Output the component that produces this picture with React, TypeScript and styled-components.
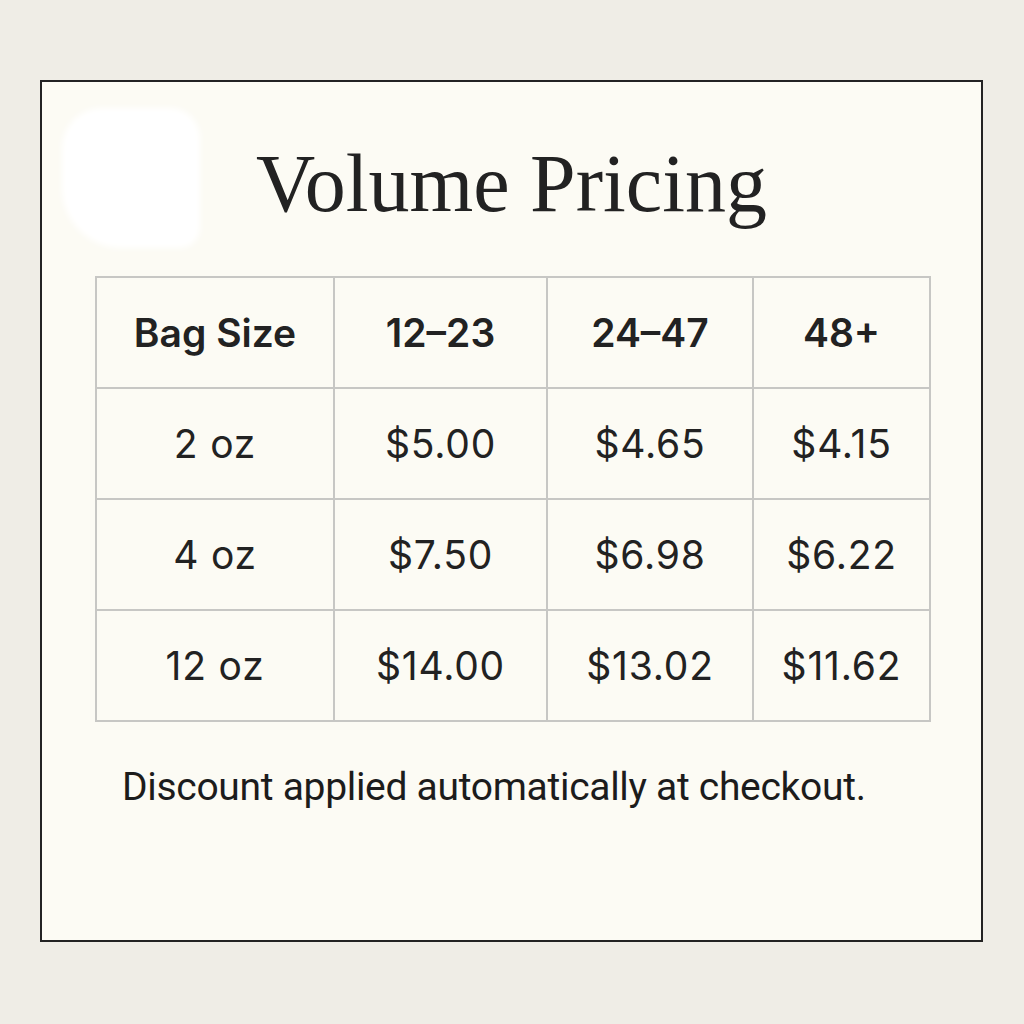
import * as React from 'react';
import styled, { createGlobalStyle } from 'styled-components';

const GlobalStyle = createGlobalStyle`
  html, body {
    margin: 0;
    padding: 0;
    background: #efede6;
  }
`;

const Page = styled.div`
  width: 1024px;
  height: 1024px;
  box-sizing: border-box;
  padding: 80px 0 0 40px;
`;

const Card = styled.div`
  position: relative;
  width: 943px;
  height: 862px;
  box-sizing: border-box;
  border: 2px solid #232323;
  background: #fcfbf4;
  display: flex;
  flex-direction: column;
  align-items: flex-start;
`;

const Smudge = styled.div`
  position: absolute;
  left: 20px;
  top: 26px;
  width: 138px;
  height: 140px;
  background: #ffffff;
  border-radius: 40px 30px 20px 60px;
  filter: blur(3px);
`;

const Title = styled.h1`
  align-self: stretch;
  margin: 61px 0 0;
  font-family: 'Liberation Serif', 'DejaVu Serif', serif;
  font-weight: 400;
  font-size: 82px;
  line-height: 1;
  color: #222222;
  text-align: center;
  position: relative;
`;

const PriceTable = styled.table`
  margin: 51px 0 0 53px;
  border-collapse: collapse;
  table-layout: fixed;
  width: 834px;
  font-family: Inter, 'Liberation Sans', sans-serif;
  color: #222222;
`;

const HeadCell = styled.th`
  height: 109px;
  padding: 0;
  border: 2px solid #c7c7c4;
  font-size: 39px;
  font-weight: 600;
  text-align: center;
  vertical-align: middle;
`;

const Cell = styled.td`
  height: 109px;
  padding: 0;
  border: 2px solid #c7c7c4;
  font-size: 39px;
  font-weight: 400;
  letter-spacing: 0.8px;
  text-align: center;
  vertical-align: middle;
`;

const Note = styled.p`
  margin: 46px 0 0 80px;
  font-family: Roboto, 'Liberation Sans', sans-serif;
  font-size: 39px;
  line-height: 1;
  color: #1c1c1c;
  letter-spacing: -0.3px;
`;

const columns = [
  { label: 'Bag Size', width: 238 },
  { label: '12–23', width: 213 },
  { label: '24–47', width: 206 },
  { label: '48+', width: 177 },
];

const rows = [
  ['2 oz', '$5.00', '$4.65', '$4.15'],
  ['4 oz', '$7.50', '$6.98', '$6.22'],
  ['12 oz', '$14.00', '$13.02', '$11.62'],
];

const App = () => (
  <>
    <GlobalStyle />
    <Page>
      <Card>
        <Smudge />
        <Title>Volume Pricing</Title>
        <PriceTable>
          <colgroup>
            {columns.map((c) => (
              <col key={c.label} style={{ width: c.width }} />
            ))}
          </colgroup>
          <thead>
            <tr>
              {columns.map((c) => (
                <HeadCell key={c.label}>{c.label}</HeadCell>
              ))}
            </tr>
          </thead>
          <tbody>
            {rows.map((r) => (
              <tr key={r[0]}>
                {r.map((v, i) => (
                  <Cell key={i}>{v}</Cell>
                ))}
              </tr>
            ))}
          </tbody>
        </PriceTable>
        <Note>Discount applied automatically at checkout.</Note>
      </Card>
    </Page>
  </>
);

export default App;
